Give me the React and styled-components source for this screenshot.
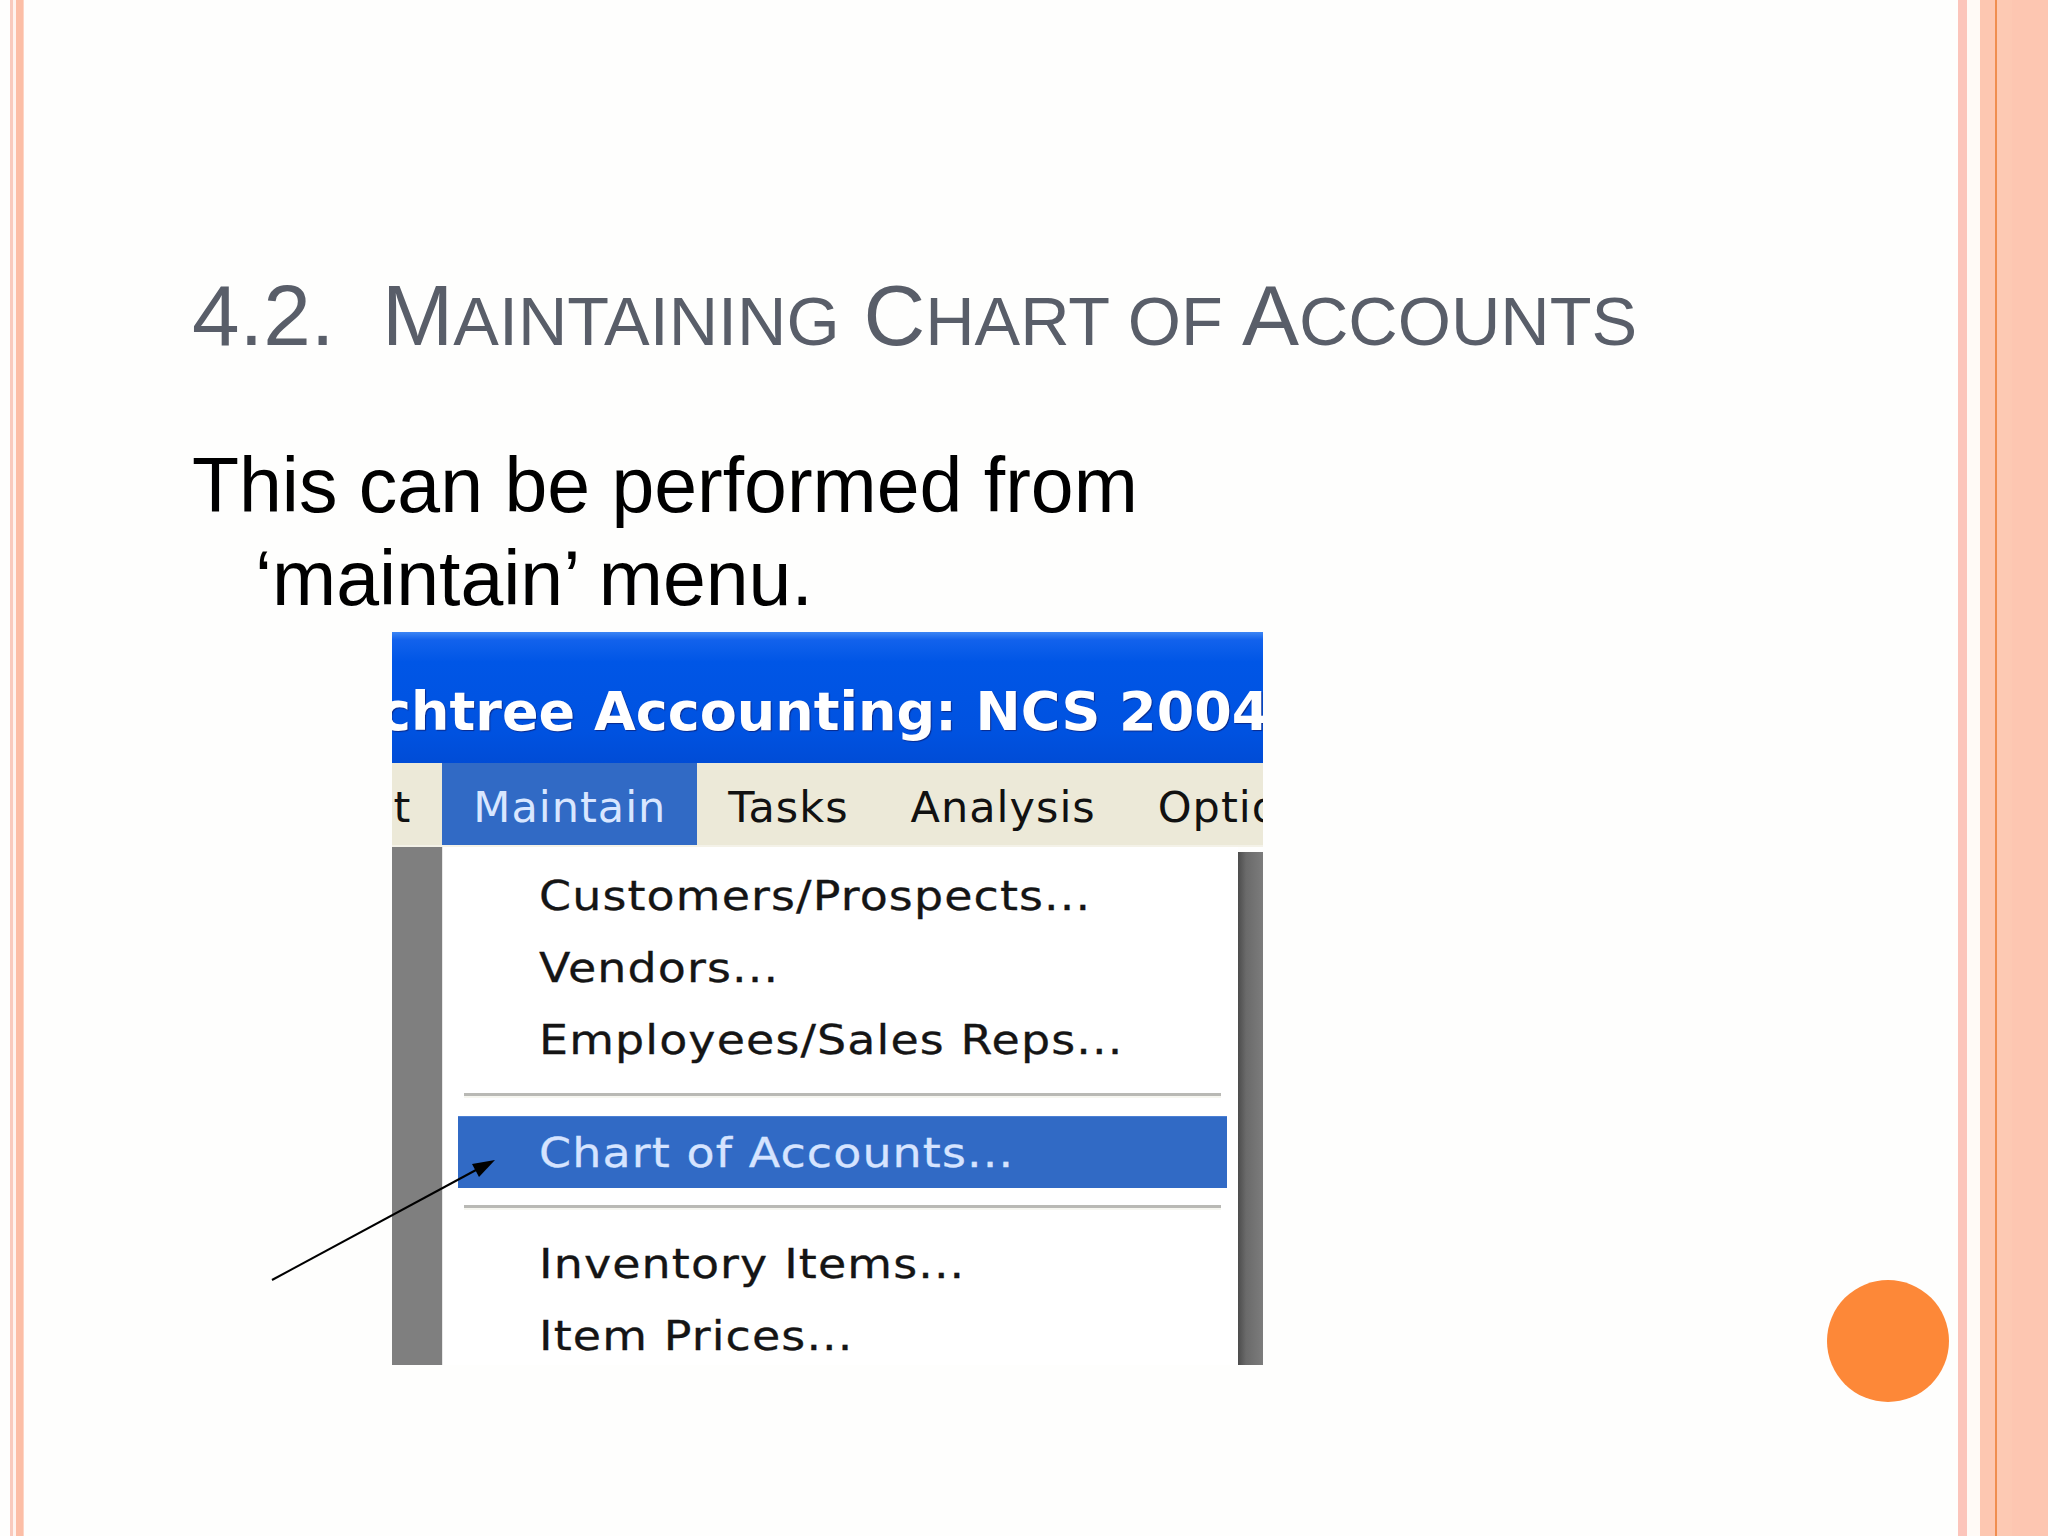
import React from 'react';
import styled, { createGlobalStyle } from 'styled-components';

const GlobalStyle = createGlobalStyle`
    html, body {
        margin: 0;
        padding: 0;
        background: #fefefd;
    }
`;

const Slide = styled.div`
    position: relative;
    display: flex;
    width: 2048px;
    height: 1536px;
    overflow: hidden;
    background: #fefefd;
`;

const LeftFrame = styled.div`
    width: 24px;
    flex-shrink: 0;
    background: linear-gradient(90deg,
        #fefefd 0 10px,
        #f9cabd 10px 13px,
        #fff3ee 13px 16px,
        #fcbea6 16px 23px,
        #fdd5c6 23px 24px);
`;

const RightFrame = styled.div`
    width: 90px;
    flex-shrink: 0;
    background: linear-gradient(90deg,
        #fcc5bb 0 9px,
        #fffaf6 9px 22px,
        #fdc7b1 22px 37px,
        #f08e50 37px 39px,
        #fdc9b3 39px 54px,
        #fdc6b1 54px 90px);
`;

const Main = styled.main`
    flex: 1;
    display: flex;
    flex-direction: column;
    align-items: flex-start;
    padding: 273px 0 0 168px;
    font-family: "Liberation Sans", Arial, sans-serif;
`;

const Title = styled.h1`
    margin: 0;
    font-size: 85.5px;
    line-height: 1;
    font-weight: 400;
    color: #595e69;
    white-space: pre;
`;

const Sc = styled.span`
    font-size: 0.8em;
    text-transform: uppercase;
`;

const Body = styled.p`
    margin: 80px 0 0;
    width: 1010px;
    box-sizing: border-box;
    padding-left: 63px;
    text-indent: -63px;
    font-size: 77px;
    line-height: 93px;
    color: #000;
`;

const Shot = styled.div`
    margin: 7px 0 0 200px;
    width: 871px;
    height: 733px;
    overflow: hidden;
    display: flex;
    flex-direction: column;
    font-family: "DejaVu Sans", Tahoma, sans-serif;
`;

const TitleBar = styled.div`
    height: 131px;
    flex-shrink: 0;
    box-sizing: border-box;
    padding-top: 53px;
    overflow: hidden;
    white-space: nowrap;
    background: linear-gradient(180deg, #3d86f4 0, #1262ec 8px, #0056e6 30px, #0052e0 100px, #004cd6 131px);
    color: #fff;
    font-weight: 700;
    font-size: 54px;
    line-height: 1;
    span {
        display: inline-block;
        margin-left: -13px;
        text-shadow: 1px 1px 1px #0a2a8a;
    }
`;

const MenuBar = styled.div`
    height: 82px;
    flex-shrink: 0;
    display: flex;
    background: #ece9d8;
    border-bottom: 2px solid #f4f2e8;
    overflow: hidden;
    white-space: nowrap;
`;

const BarItem = styled.div`
    padding: 23px 31px 0;
    margin-left: ${p => p.$clip ? '-99px' : '0'};
    font-size: 43px;
    line-height: 1;
    letter-spacing: 1px;
    color: ${p => p.$open ? '#d8e6ff' : '#111'};
    background: ${p => p.$open ? '#316ac5' : 'transparent'};
`;

const Workspace = styled.div`
    flex: 1;
    display: flex;
    min-height: 0;
`;

const AppBack = styled.div`
    width: 50px;
    flex-shrink: 0;
    background: #7f7f7f;
`;

const Dropdown = styled.div`
    flex: 1;
    display: flex;
    flex-direction: column;
    padding-top: 13px;
    background: #fff;
    border-left: 1px solid #e8e8e8;
    font-size: 41px;
    letter-spacing: 1px;
    color: #111;
`;

const Shadow = styled.div`
    width: 25px;
    flex-shrink: 0;
    margin-top: 5px;
    background: linear-gradient(90deg, #4c4c4c 0, #6a6a6a 8px, #7c7c7c 100%);
`;

const Item = styled.div`
    height: 72px;
    flex-shrink: 0;
    box-sizing: border-box;
    line-height: 72px;
    white-space: nowrap;
    margin: ${p => p.$active ? '0 11px 0 15px' : '0'};
    padding-left: ${p => p.$active ? '81px' : '96px'};
    background: ${p => p.$active ? '#316ac5' : 'transparent'};
    color: ${p => p.$active ? '#d6e4ff' : '#151515'};
    border-top: ${p => p.$active ? '1px solid #4c80d4' : 'none'};
    span {
        display: inline-block;
        transform: scaleX(1.12);
        transform-origin: left center;
        -webkit-text-stroke: 0.3px currentColor;
    }
`;

const Separator = styled.div`
    height: 40px;
    flex-shrink: 0;
    display: flex;
    align-items: center;
    padding: 0 17px 0 21px;
    &::after {
        content: '';
        flex: 1;
        height: 3px;
        background: #b9b9b5;
        border-bottom: 2px solid #f6f6f0;
    }
`;

const Circle = styled.div`
    position: absolute;
    left: 1827px;
    top: 1280px;
    width: 122px;
    height: 122px;
    border-radius: 50%;
    background: #fd8838;
`;

const Arrow = styled.svg`
    position: absolute;
    left: 260px;
    top: 1150px;
    width: 250px;
    height: 140px;
`;

const entries = [
    'Customers/Prospects...',
    'Vendors...',
    'Employees/Sales Reps...',
    '-',
    'Chart of Accounts...',
    '-',
    'Inventory Items...',
    'Item Prices...',
];

export default function App() {
    return (
        <>
            <GlobalStyle />
            <Slide>
                <LeftFrame />
                <Main>
                    <Title>
                        {'4.2.  M'}<Sc>aintaining</Sc>{' C'}<Sc>hart of</Sc>{' A'}<Sc>ccounts</Sc>
                    </Title>
                    <Body>This can be performed from ‘maintain’ menu.</Body>
                    <Shot>
                        <TitleBar><span>chtree Accounting: NCS 2004</span></TitleBar>
                        <MenuBar>
                            <BarItem $clip>Edit</BarItem>
                            <BarItem $open>Maintain</BarItem>
                            <BarItem>Tasks</BarItem>
                            <BarItem>Analysis</BarItem>
                            <BarItem>Options</BarItem>
                        </MenuBar>
                        <Workspace>
                            <AppBack />
                            <Dropdown>
                                {entries.map((e, i) => e === '-'
                                    ? <Separator key={i} />
                                    : <Item key={i} $active={e.startsWith('Chart')}><span>{e}</span></Item>
                                )}
                            </Dropdown>
                            <Shadow />
                        </Workspace>
                    </Shot>
                </Main>
                <RightFrame />
                <Arrow viewBox="0 0 250 140">
                    <line x1="12" y1="130" x2="216" y2="20" stroke="#000" strokeWidth="2" />
                    <polygon points="235,10 219,27 212,14" fill="#000" />
                </Arrow>
                <Circle />
            </Slide>
        </>
    );
}
